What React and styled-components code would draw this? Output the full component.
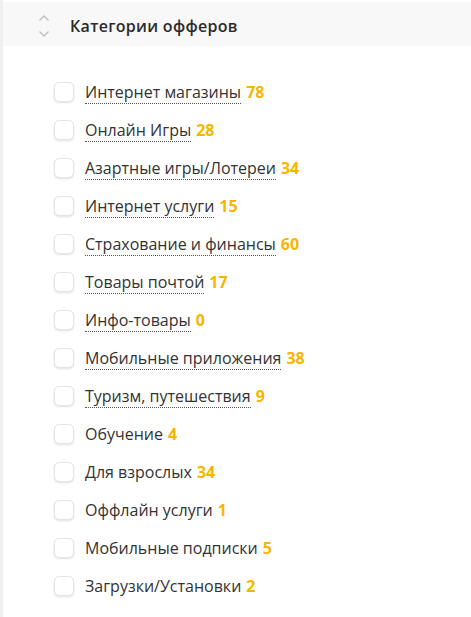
import React from 'react'
import styled, { createGlobalStyle } from 'styled-components'

const categories = [
  { name: 'Интернет магазины', count: 78, dotted: true },
  { name: 'Онлайн Игры', count: 28, dotted: true },
  { name: 'Азартные игры/Лотереи', count: 34, dotted: true },
  { name: 'Интернет услуги', count: 15, dotted: true },
  { name: 'Страхование и финансы', count: 60, dotted: true },
  { name: 'Товары почтой', count: 17, dotted: true },
  { name: 'Инфо-товары', count: 0, dotted: true },
  { name: 'Мобильные приложения', count: 38, dotted: true },
  { name: 'Туризм, путешествия', count: 9, dotted: true },
  { name: 'Обучение', count: 4 },
  { name: 'Для взрослых', count: 34 },
  { name: 'Оффлайн услуги', count: 1 },
  { name: 'Мобильные подписки', count: 5 },
  { name: 'Загрузки/Установки', count: 2 },
]

const Global = createGlobalStyle`
  body {
    margin: 0;
    background: #fff;
    font-family: "Open Sans", "Noto Sans", sans-serif;
  }
`

const Panel = styled.section`
  min-height: 617px;
  border-left: 3px solid #efefef;
  padding-top: 2px;
`

const Header = styled.div`
  height: 44px;
  box-sizing: border-box;
  padding: 3px 0 0 35px;
  background: #f8f8f8;
  display: flex;
  align-items: center;
  gap: 20px;
`

const Sorter = styled.svg`
  width: 12px;
  height: 26px;
  flex-shrink: 0;
`

const Title = styled.h3`
  margin: 0;
  font-size: 16px;
  font-weight: 600;
  color: #2b2b2b;
  letter-spacing: 0.3px;
`

const List = styled.ul`
  list-style: none;
  margin: 0;
  padding: 34px 0 0 51px;
  display: flex;
  flex-direction: column;
  gap: 15px;
`

const Row = styled.li`
  display: flex;
  align-items: center;
  height: 23px;
  gap: 11px;
`

const Box = styled.span`
  width: 18px;
  height: 18px;
  border: 1px solid #e4e4e4;
  border-radius: 5px;
  box-shadow: 0 1px 2px rgba(0, 0, 0, 0.12);
  background: #fff;
  flex-shrink: 0;
`

const Label = styled.span`
  font-size: 16px;
  color: #333;
  border-bottom: ${p => (p.$dotted ? '1px dotted #555' : '1px solid transparent')};
  line-height: 20px;
`

const Count = styled.b`
  font-size: 16px;
  color: #f7b500;
  font-weight: 700;
  margin-left: 5px;
`

export default function App() {
  return (
    <>
      <Global />
      <Panel>
        <Header>
          <Sorter viewBox="0 0 12 26" fill="none" stroke="#bdbdbd" strokeWidth="1.3">
            <path d="M1.5 7.5 L6 3 L10.5 7.5" />
            <path d="M1.5 18.5 L6 23 L10.5 18.5" />
          </Sorter>
          <Title>Категории офферов</Title>
        </Header>
        <List>
          {categories.map(c => (
            <Row key={c.name}>
              <Box />
              <span>
                <Label $dotted={c.dotted}>{c.name}</Label>
                <Count>{c.count}</Count>
              </span>
            </Row>
          ))}
        </List>
      </Panel>
    </>
  )
}
